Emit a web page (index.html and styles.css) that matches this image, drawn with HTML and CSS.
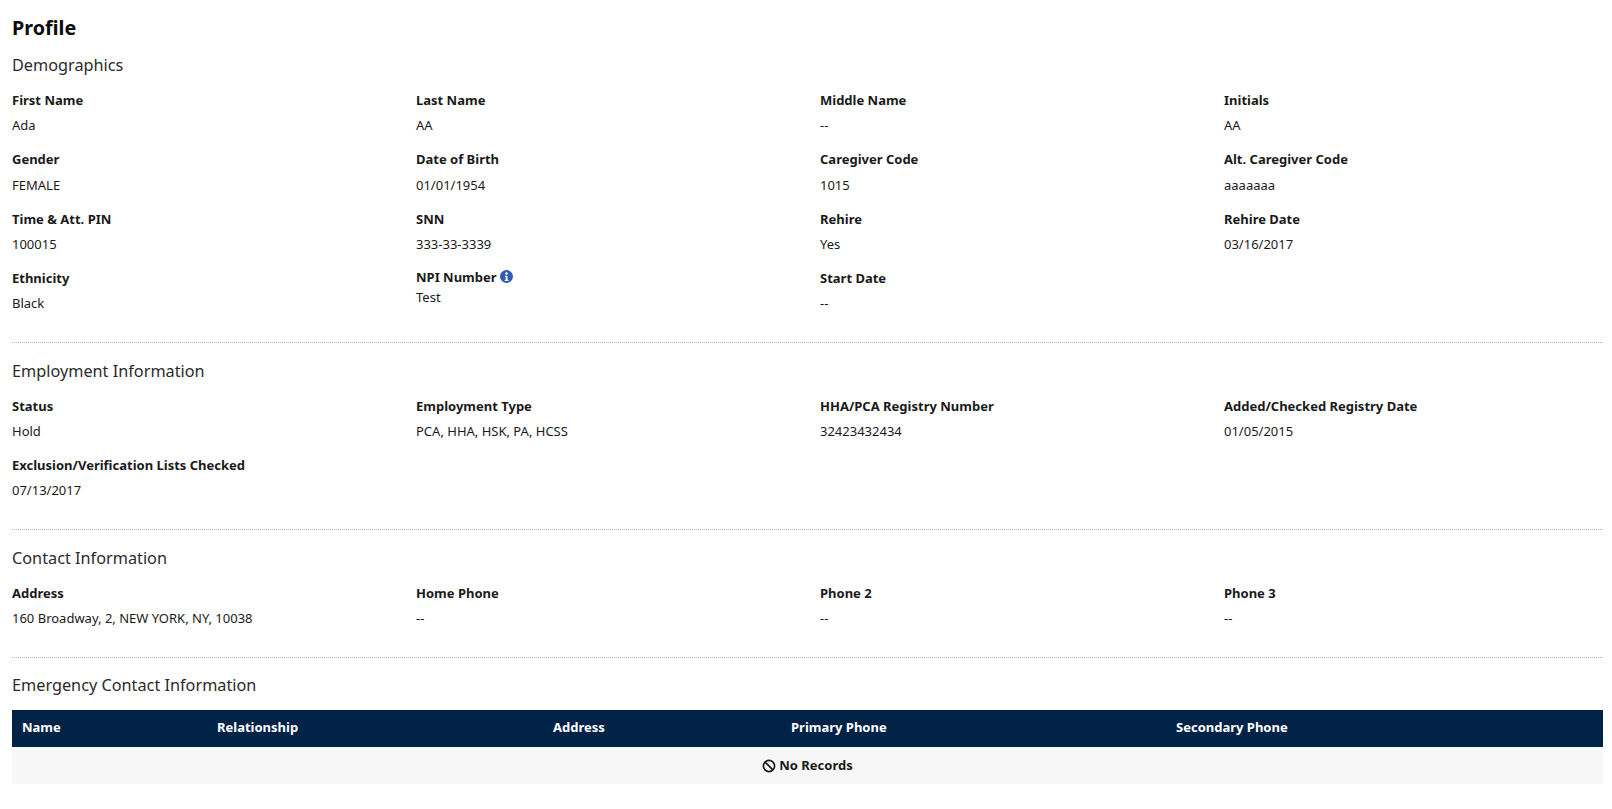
FILE: index.html
```html
<!DOCTYPE html>
<html lang="en">
<head>
<meta charset="utf-8">
<title>Profile</title>
<link rel="stylesheet" href="styles.css">
</head>
<body>
<main class="page">
<h1 class="title">Profile</h1>
<section class="section">
<h2 class="heading">Demographics</h2>
<div class="grid">
<div class="field"><div class="label">First Name</div><div class="value">Ada</div></div>
<div class="field"><div class="label">Last Name</div><div class="value">AA</div></div>
<div class="field"><div class="label">Middle Name</div><div class="value">--</div></div>
<div class="field"><div class="label">Initials</div><div class="value">AA</div></div>
<div class="field"><div class="label">Gender</div><div class="value">FEMALE</div></div>
<div class="field"><div class="label">Date of Birth</div><div class="value">01/01/1954</div></div>
<div class="field"><div class="label">Caregiver Code</div><div class="value">1015</div></div>
<div class="field"><div class="label">Alt. Caregiver Code</div><div class="value">aaaaaaa</div></div>
<div class="field"><div class="label">Time &amp; Att. PIN</div><div class="value">100015</div></div>
<div class="field"><div class="label">SNN</div><div class="value">333-33-3339</div></div>
<div class="field"><div class="label">Rehire</div><div class="value">Yes</div></div>
<div class="field"><div class="label">Rehire Date</div><div class="value">03/16/2017</div></div>
<div class="field"><div class="label">Ethnicity</div><div class="value">Black</div></div>
<div class="field field-tight"><div class="label label-icon">NPI Number <svg class="info" viewBox="0 0 16 16"><circle cx="8" cy="8" r="8" fill="#2f5bb7"/><circle cx="8" cy="4.2" r="1.5" fill="#fff"/><path d="M6 7h3.2v5h1.2v1.5H5.8V12H7V8.5H6z" fill="#fff"/></svg></div><div class="value">Test</div></div>
<div class="field"><div class="label">Start Date</div><div class="value">--</div></div>
</div>
</section>
<section class="section">
<h2 class="heading">Employment Information</h2>
<div class="grid">
<div class="field"><div class="label">Status</div><div class="value">Hold</div></div>
<div class="field"><div class="label">Employment Type</div><div class="value">PCA, HHA, HSK, PA, HCSS</div></div>
<div class="field"><div class="label">HHA/PCA Registry Number</div><div class="value">32423432434</div></div>
<div class="field"><div class="label">Added/Checked Registry Date</div><div class="value">01/05/2015</div></div>
<div class="field"><div class="label">Exclusion/Verification Lists Checked</div><div class="value">07/13/2017</div></div>
</div>
</section>
<section class="section">
<h2 class="heading">Contact Information</h2>
<div class="grid">
<div class="field"><div class="label">Address</div><div class="value">160 Broadway, 2, NEW YORK, NY, 10038</div></div>
<div class="field"><div class="label">Home Phone</div><div class="value">--</div></div>
<div class="field"><div class="label">Phone 2</div><div class="value">--</div></div>
<div class="field"><div class="label">Phone 3</div><div class="value">--</div></div>
</div>
</section>
<section class="section section-last">
<h2 class="heading">Emergency Contact Information</h2>
<table class="table">
<thead><tr><th class="c1">Name</th><th class="c2">Relationship</th><th class="c3">Address</th><th class="c4">Primary Phone</th><th class="c5">Secondary Phone</th></tr></thead>
<tbody><tr><td colspan="5" class="empty"><svg class="ban" viewBox="0 0 16 16"><circle cx="8" cy="8" r="6.4" fill="none" stroke="#1a1a1a" stroke-width="1.9"/><path d="M3.6 3.6l8.8 8.8" stroke="#1a1a1a" stroke-width="1.9"/></svg>No Records</td></tr></tbody>
</table>
</section>
</main>
</body>
</html>
```
FILE: styles.css
```css
* { box-sizing: border-box; }
body { margin: 0; background: #fff; color: #111; font-family: "Noto Sans", sans-serif; font-size: 13px; }
.page { padding: 13px 9px 0 12px; }
.title { margin: 0 0 4px; font-size: 19.75px; font-weight: 700; line-height: 30px; color: #0b0b0b; }
.section { border-bottom: 1px dotted #b5b5b5; padding-bottom: 16.5px; margin-bottom: 10px; }
.section-last { border-bottom: 0; margin-bottom: 0; padding-bottom: 0; }
.heading { margin: 0; padding-top: 6px; font-size: 16.25px; font-weight: 400; line-height: 24px; color: #2b2b2b; }
.section-last .heading { padding-top: 5px; }
.grid { display: grid; grid-template-columns: repeat(3, 404px) 1fr; margin-top: 11px; }
.field { height: 59.33px; padding-top: 3px; }
.label { font-size: 13px; font-weight: 700; line-height: 18px; color: #1a1a1a; }
.label-icon { display: flex; align-items: center; gap: 3px; }
.value { margin-top: 7.33px; font-size: 13px; line-height: 18px; color: #1a1a1a; }
.field-tight { padding-top: 2px; }
.field-tight .value { margin-top: 2px; }
.info { width: 13px; height: 13px; }
.table { width: 100%; border-collapse: collapse; table-layout: fixed; margin-top: 13px; }
.table th { background: #012348; color: #fff; font-size: 13px; font-weight: 700; text-align: left; height: 37px; padding: 0 10px 2px; }
.c1 { width: 195px; }
.c2 { width: 336px; }
.c3 { width: 238px; }
.c4 { width: 385px; }
.empty { background: #f7f7f7; height: 37px; text-align: center; font-size: 13px; font-weight: 700; color: #1a1a1a; }
.ban { width: 14px; height: 14px; vertical-align: -3px; margin-right: 3px; }
```
